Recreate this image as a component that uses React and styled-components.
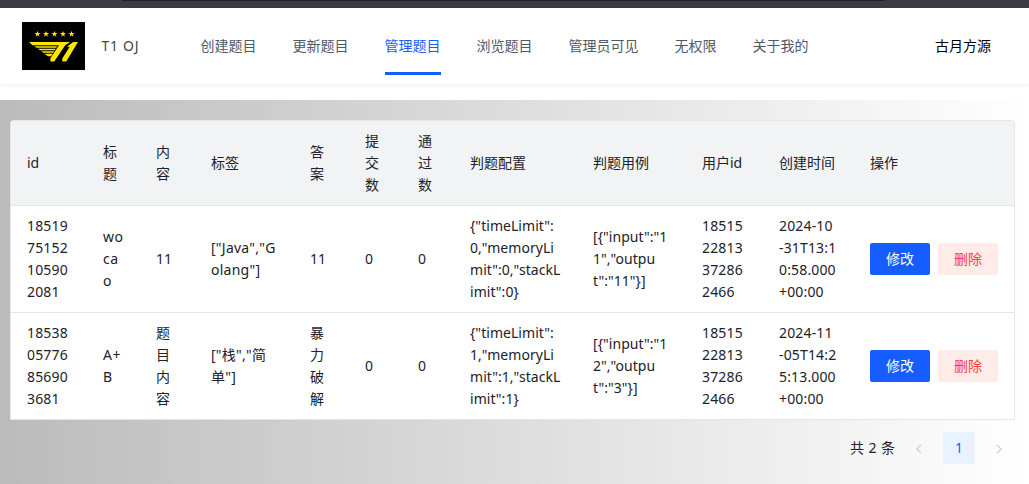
import React from "react";
import styled, { createGlobalStyle } from "styled-components";

const GlobalStyle = createGlobalStyle`
  * { box-sizing: border-box; }
  body {
    margin: 0;
    font-family: "Noto Sans", "Noto Sans CJK SC", sans-serif;
    font-size: 14px;
    line-height: 22px;
    color: #1d2129;
    background: #fff;
  }
`;

const Page = styled.div`
  display: flex;
  flex-direction: column;
  width: 1029px;
  height: 484px;
  overflow: hidden;
`;

const BrowserEdge = styled.div`
  position: relative;
  z-index: 1;
  flex: none;
  height: 8px;
  padding: 0 144px 0 122px;
  background: #3b3b44;
`;

const AddressBar = styled.div`
  height: 1px;
  background: #22222b;
`;

const Header = styled.header`
  flex: none;
  display: flex;
  align-items: center;
  height: 76px;
  margin-bottom: 16px;
  padding: 0 37px 0 22px;
  background: #fff;
  box-shadow: 0 1px 5px #eee;
`;

const Brand = styled.div`
  display: flex;
  align-items: center;
  width: 178.5px;
  gap: 16.5px;
  color: #444;
`;

const BrandName = styled.span`
  letter-spacing: 0.7px;
`;

const Nav = styled.nav`
  display: flex;
  flex: 1;
  gap: 36px;
`;

const NavItem = styled.a`
  height: 57px;
  padding-top: 17px;
  border-bottom: 3px solid ${(p) => (p.$active ? "#165dff" : "transparent")};
  color: ${(p) => (p.$active ? "#165dff" : "#4e5969")};
  white-space: nowrap;
`;

const UserName = styled.div`
  margin-right: 1px;
  color: #000;
`;

const Content = styled.main`
  flex: 1;
  padding: 20px 14px 0 10px;
  background: linear-gradient(90deg, #bbb, #fff);
`;

const Table = styled.table`
  width: 1005px;
  table-layout: fixed;
  border-collapse: separate;
  border-spacing: 0;
  border: 1px solid #e5e6eb;
  border-bottom: 0;
  border-radius: 4px 4px 0 0;
  background: #fff;
  overflow: hidden;
`;

const HeadCell = styled.th`
  height: 85px;
  padding: 9px 16px;
  text-align: left;
  font-weight: 400;
  background: #f2f3f5;
  border-bottom: 1px solid #e5e6eb;
  white-space: pre;
`;

const Cell = styled.td`
  height: 107px;
  padding: 9px 0 9px 16px;
  border-bottom: 1px solid #e5e6eb;
  white-space: pre;
  letter-spacing: ${(p) => p.$spacing || 0}px;
`;

const Actions = styled.div`
  display: flex;
  gap: 8px;
`;

const Button = styled.button`
  width: 60px;
  height: 32px;
  padding: 0;
  border: 0;
  border-radius: 2px;
  font: inherit;
  color: ${(p) => (p.$danger ? "#f53f3f" : "#fff")};
  background: ${(p) => (p.$danger ? "#ffece8" : "#165dff")};
`;

const Pagination = styled.div`
  display: flex;
  justify-content: flex-end;
  align-items: center;
  margin-top: 12px;
`;

const Total = styled.span`
  margin-right: 8px;
  word-spacing: 0.8px;
`;

const PageNumber = styled.span`
  width: 32px;
  height: 32px;
  margin: 0 8px;
  border-radius: 2px;
  line-height: 32px;
  text-align: center;
  color: #165dff;
  background: #e8f3ff;
`;

const ArrowBox = styled.span`
  display: flex;
  align-items: center;
  justify-content: center;
  width: 32px;
  height: 32px;
  padding-top: 2px;
`;

const Arrow = ({ d }) => (
  <ArrowBox>
    <svg width="12" height="12" viewBox="0 0 12 12" fill="none" stroke="#c9cdd4" strokeWidth="1.2">
      <path d={d} />
    </svg>
  </ArrowBox>
);

const STAR = "M0-2.7L.7-.8 2.7-.8 1.1.4 1.7 2.4 0 1.2-1.7 2.4-1.1.4-2.7-.8-.7-.8Z";

const Logo = () => (
  <svg width="63" height="48" viewBox="0 0 63 48">
    <rect width="63" height="48" fill="#000" />
    <g fill="#ffe600">
      {[15.5, 24, 32.5, 41, 49.5].map((x) => (
        <path key={x} d={STAR} transform={`translate(${x} 12) scale(1.1)`} />
      ))}
      <path d="M7 20H48L43.2 23.2L32.2 39.5H28.4V36.3L37 23.3H10.5Z" />
      <path d="M12.5 24.2H35.2L34.2 25.7H14.5Z" />
      <path d="M16 26.7H33.7L32.7 28.2H18Z" />
      <path d="M19.3 29.2H32.2L31.2 30.7H21.3Z" />
      <path d="M22.5 31.7H30.7L29 34.2H26Z" />
      <path d="M51.2 20H56L44.2 39.5H40.3V36.4L47.6 24.9L45.2 24.4Z" />
    </g>
  </svg>
);

const NAV = ["创建题目", "更新题目", "管理题目", "浏览题目", "管理员可见", "无权限", "关于我的"];

const COLUMNS = [
  { name: "id", width: 76, spacing: 0.15 },
  { name: "标\n题", width: 53, spacing: 0.6 },
  { name: "内\n容", width: 55 },
  { name: "标签", width: 99, spacing: 0.25 },
  { name: "答\n案", width: 55 },
  { name: "提\n交\n数", width: 53 },
  { name: "通\n过\n数", width: 52 },
  { name: "判题配置", width: 123, spacing: 0.05 },
  { name: "判题用例", width: 109, spacing: 0.05 },
  { name: "用户id", width: 77, spacing: 0.15 },
  { name: "创建时间", width: 91, spacing: 0.15 },
  { name: "操作", width: 160 },
];

const ROWS = [
  [
    "18519\n75152\n10590\n2081",
    "wo\nca\no",
    "11",
    '["Java","G\nolang"]',
    "11",
    "0",
    "0",
    '{"timeLimit":\n0,"memoryLi\nmit":0,"stackL\nimit":0}',
    '[{"input":"1\n1","outpu\nt":"11"}]',
    "18515\n22813\n37286\n2466",
    "2024-10\n-31T13:1\n0:58.000\n+00:00",
  ],
  [
    "18538\n05776\n85690\n3681",
    "A+\nB",
    "题\n目\n内\n容",
    '["栈","简\n单"]',
    "暴\n力\n破\n解",
    "0",
    "0",
    '{"timeLimit":\n1,"memoryLi\nmit":1,"stackL\nimit":1}',
    '[{"input":"1\n2","outpu\nt":"3"}]',
    "18515\n22813\n37286\n2466",
    "2024-11\n-05T14:2\n5:13.000\n+00:00",
  ],
];

export default function App() {
  return (
    <Page>
      <GlobalStyle />
      <BrowserEdge>
        <AddressBar />
      </BrowserEdge>
      <Header>
        <Brand>
          <Logo />
          <BrandName>T1 OJ</BrandName>
        </Brand>
        <Nav>
          {NAV.map((label) => (
            <NavItem key={label} $active={label === "管理题目"}>
              {label}
            </NavItem>
          ))}
        </Nav>
        <UserName>古月方源</UserName>
      </Header>
      <Content>
        <Table>
          <colgroup>
            {COLUMNS.map(({ name, width }) => (
              <col key={name} width={width} />
            ))}
          </colgroup>
          <thead>
            <tr>
              {COLUMNS.map(({ name }) => (
                <HeadCell key={name}>{name}</HeadCell>
              ))}
            </tr>
          </thead>
          <tbody>
            {ROWS.map((row) => (
              <tr key={row[0]}>
                {row.map((text, i) => (
                  <Cell key={COLUMNS[i].name} $spacing={COLUMNS[i].spacing}>
                    {text}
                  </Cell>
                ))}
                <Cell>
                  <Actions>
                    <Button>修改</Button>
                    <Button $danger>删除</Button>
                  </Actions>
                </Cell>
              </tr>
            ))}
          </tbody>
        </Table>
        <Pagination>
          <Total>共 2 条</Total>
          <Arrow d="M8 1.8L3.8 6 8 10.2" />
          <PageNumber>1</PageNumber>
          <Arrow d="M4 1.8L8.2 6 4 10.2" />
        </Pagination>
      </Content>
    </Page>
  );
}
